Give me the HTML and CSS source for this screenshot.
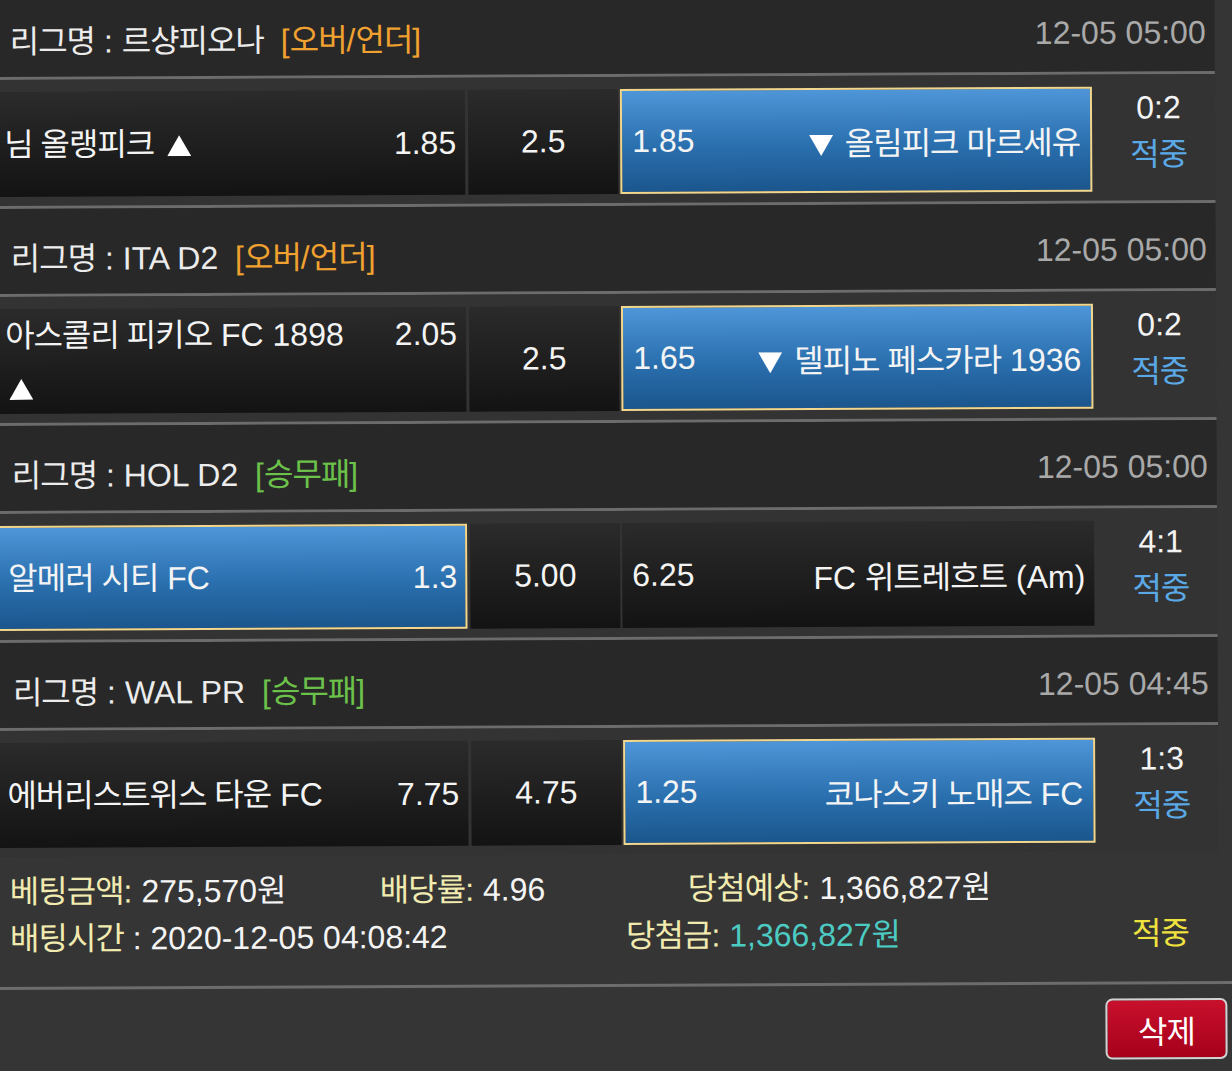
FILE: index.html
```html
<!DOCTYPE html>
<html lang="ko">
<head>
<meta charset="utf-8">
<title>베팅내역</title>
<link rel="stylesheet" href="styles.css">
</head>
<body>
<div class="page">
  <div class="list">
    <section class="game">
      <div class="league">
        <div class="league-name"><span class="k">리그명</span> : <span class="k">르샹피오나</span> <span class="type ou">[<span class="k">오버</span>/<span class="k">언더</span>]</span></div>
        <div class="time">12-05 05:00</div>
      </div>
      <div class="odds-row">
        <div class="cell home"><div class="inner"><span class="odd-r">1.85</span><span class="k">님 올랭피크</span> <svg class="tri up" viewBox="0 0 24 21" width="24" height="21" aria-label="▲"><polygon points="12,0 24,21 0,21" fill="#ffffff"/></svg></div></div>
        <div class="cell draw">2.5</div>
        <div class="cell away sel"><span>1.85</span><span><svg class="tri down" viewBox="0 0 24 21" width="24" height="21" aria-label="▼"><polygon points="0,0 24,0 12,21" fill="#ffffff"/></svg> <span class="k">올림피크 마르세유</span></span></div>
        <div class="result"><div class="score">0:2</div><div class="hit k">적중</div></div>
      </div>
    </section>

    <section class="game">
      <div class="league">
        <div class="league-name"><span class="k">리그명</span> : ITA D2 <span class="type ou">[<span class="k">오버</span>/<span class="k">언더</span>]</span></div>
        <div class="time">12-05 05:00</div>
      </div>
      <div class="odds-row">
        <div class="cell home"><div class="inner"><span class="odd-r">2.05</span><span class="k">아스콜리 피키오</span> FC 1898 <svg class="tri up" viewBox="0 0 24 21" width="24" height="21" aria-label="▲"><polygon points="12,0 24,21 0,21" fill="#ffffff"/></svg></div></div>
        <div class="cell draw">2.5</div>
        <div class="cell away sel"><span>1.65</span><span><svg class="tri down" viewBox="0 0 24 21" width="24" height="21" aria-label="▼"><polygon points="0,0 24,0 12,21" fill="#ffffff"/></svg> <span class="k">델피노 페스카라</span> 1936</span></div>
        <div class="result"><div class="score">0:2</div><div class="hit k">적중</div></div>
      </div>
    </section>

    <section class="game">
      <div class="league">
        <div class="league-name"><span class="k">리그명</span> : HOL D2 <span class="type wdl">[<span class="k">승무패</span>]</span></div>
        <div class="time">12-05 05:00</div>
      </div>
      <div class="odds-row">
        <div class="cell home sel"><div class="inner"><span class="odd-r">1.3</span><span class="k">알메러 시티</span> FC</div></div>
        <div class="cell draw">5.00</div>
        <div class="cell away"><span>6.25</span><span>FC <span class="k">위트레흐트</span> (Am)</span></div>
        <div class="result"><div class="score">4:1</div><div class="hit k">적중</div></div>
      </div>
    </section>

    <section class="game">
      <div class="league">
        <div class="league-name"><span class="k">리그명</span> : WAL PR <span class="type wdl">[<span class="k">승무패</span>]</span></div>
        <div class="time">12-05 04:45</div>
      </div>
      <div class="odds-row">
        <div class="cell home"><div class="inner"><span class="odd-r">7.75</span><span class="k">에버리스트위스 타운</span> FC</div></div>
        <div class="cell draw">4.75</div>
        <div class="cell away sel"><span>1.25</span><span><span class="k">코나스키 노매즈</span> FC</span></div>
        <div class="result"><div class="score">1:3</div><div class="hit k">적중</div></div>
      </div>
    </section>
  </div>

  <footer class="summary">
    <div class="line">
      <span class="c1"><span class="lbl k">베팅금액</span><span class="lbl">:</span> 275,570<span class="k">원</span></span>
      <span class="c2"><span class="lbl k">배당률</span><span class="lbl">:</span> 4.96</span>
      <span class="c3"><span class="lbl k">당첨예상</span><span class="lbl">:</span> 1,366,827<span class="k">원</span></span>
    </div>
    <div class="line">
      <span class="d1"><span class="lbl k">배팅시간</span> : 2020-12-05 04:08:42</span>
      <span class="d2"><span class="lbl k">당첨금</span><span class="lbl">:</span> <span class="win">1,366,827<span class="k">원</span></span></span>
      <span class="d3 k">적중</span>
    </div>
  </footer>
  <div class="actions">
    <button class="delete" type="button"><span class="k">삭제</span></button>
  </div>
</div>
</body>
</html>
```

FILE: styles.css
```css
html, body {
  margin: 0;
  padding: 0;
  background: #353535;
  overflow: hidden;
}

body {
  width: 1232px;
  height: 1071px;
  font-family: "Liberation Sans", "Noto Sans CJK KR", sans-serif;
  font-size: 32px;
  color: #f4f4f4;
}

.page {
  width: 1232px;
  height: 1110px;
  background: #353535;
  transform: rotate(-0.28deg);
  transform-origin: 616px 535px;
}

.k {
  letter-spacing: -1px;
}

.tri {
  display: inline-block;
  vertical-align: -1px;
}

.tri.up {
  margin-left: 4px;
}

.tri.down {
  margin-right: 3px;
}

/* match list */
.list {
  width: 1225px;
  margin: -14px 0 0 -8px;
}

.game {
  border-top: 3px solid #6c6c6c;
}

.league {
  box-sizing: border-box;
  height: 88px;
  padding: 8px 9px 0 20px;
  display: flex;
  align-items: center;
  justify-content: space-between;
  background: #282828;
  border-bottom: 3px solid #6c6c6c;
  color: #ececec;
}

.type {
  margin-left: 8px;
}

.ou {
  color: #f0a12f;
}

.wdl {
  color: #6cc14a;
}

.time {
  color: #a9a9a9;
}

.odds-row {
  display: flex;
  height: 105px;
  padding: 12px 0 9px;
  background: #333333;
}

.cell {
  box-sizing: border-box;
  display: flex;
  align-items: center;
  background: linear-gradient(#2b2b2b, #131313);
  color: #f4f4f4;
}

.sel {
  background: linear-gradient(#4e96d8, #2a6fae 55%, #1b568d);
  border: 2px solid #f1d68e;
}

.home {
  width: 475px;
  padding: 0 9px 0 14px;
}

.home.sel {
  padding: 0 8px 0 14px;
}

.home .inner {
  flex: 1;
  line-height: 52px;
}

.odd-r {
  float: right;
  margin-left: 24px;
}

.draw {
  width: 150px;
  margin-left: 3px;
  justify-content: center;
}

.away {
  width: 472px;
  margin-left: 2px;
  padding: 0 9px 0 10px;
  justify-content: space-between;
}

.away.sel {
  padding: 0 10px 0 10px;
}

.result {
  width: 123px;
  box-sizing: border-box;
  display: flex;
  flex-direction: column;
  align-items: center;
  justify-content: center;
  padding: 0 0 16px 10px;
  line-height: 47px;
}

.score {
  color: #f4f4f4;
}

.hit {
  color: #5aa9e6;
}

/* summary */
.summary {
  margin: 0 -12px;
  padding: 8px 12px 28px;
  border-bottom: 3px solid #6c6c6c;
}

.line {
  display: flex;
  height: 47px;
  align-items: center;
  padding-left: 8px;
  white-space: nowrap;
}

.lbl {
  color: #f1ebb0;
}

.c1 { width: 370px; }
.c2 { width: 308px; }
.d1 { width: 616px; }
.d2 { width: 506px; }

.win {
  color: #4ccbc3;
}

.d3 {
  color: #efe23e;
}

.actions {
  display: flex;
  justify-content: flex-end;
  padding: 14px 7px 0 0;
}

.delete {
  width: 122px;
  height: 61px;
  border: 2px solid #d2d2d2;
  border-radius: 7px;
  background: linear-gradient(#c8102c, #a6001b);
  color: #ffffff;
  font-family: "Liberation Sans", "Noto Sans CJK KR", sans-serif;
  font-size: 32px;
  padding: 0;
}
```
